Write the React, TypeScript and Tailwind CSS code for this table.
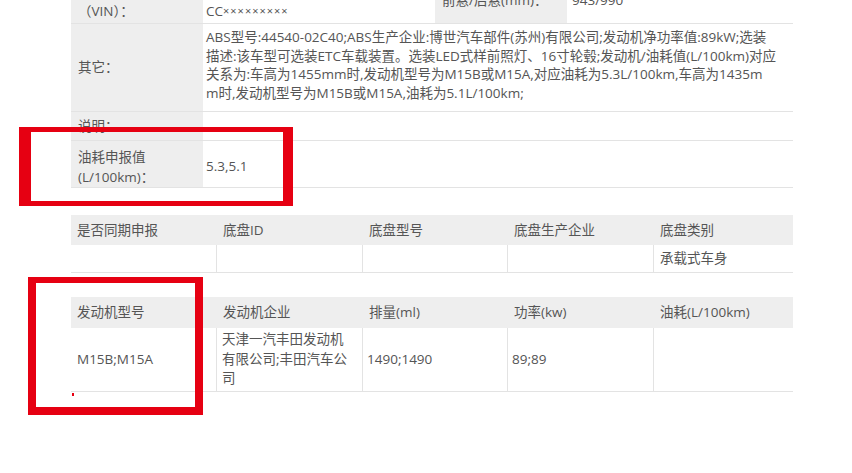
const labelCell = "bg-[#eeeeee] w-[132px] shrink-0 pl-[7px] flex";
const rowLine = "border-b border-[#e3e3e3]";

const otherLines = [
  "ABS型号:44540-02C40;ABS生产企业:博世汽车部件(苏州)有限公司;发动机净功率值:89kW;选装",
  "描述:该车型可选装ETC车载装置。选装LED式样前照灯、16寸轮毂;发动机/油耗值(L/100km)对应",
  "关系为:车高为1455mm时,发动机型号为M15B或M15A,对应油耗为5.3L/100km,车高为1435m",
  "m时,发动机型号为M15B或M15A,油耗为5.1L/100km;",
];

const chassisHead = ["是否同期申报", "底盘ID", "底盘型号", "底盘生产企业", "底盘类别"];
const chassisRow = ["", "", "", "", "承载式车身"];

const engineHead = ["发动机型号", "发动机企业", "排量(ml)", "功率(kw)", "油耗(L/100km)"];

const cols = "grid grid-cols-[146px_146px_145px_146px_139px]";

export default function App() {
  return (
    <div
      className="relative h-[473px] w-[852px] overflow-hidden bg-white text-[13.5px] text-[#555]"
      style={{ fontFamily: '"Open Sans", "Noto Sans CJK SC", sans-serif' }}
    >
      <div className="ml-[71px] w-[722px]">
        {/* vehicle info */}
        <div className="-mt-[22px]">
          <div className={`flex h-[46px] ${rowLine}`}>
            <div className={`${labelCell} items-end pb-[3px] leading-[18px]`}>
              <div>
                车辆识别代号
                <br />（VIN）：
              </div>
            </div>
            <div className="w-[232px] shrink-0 flex items-end pl-[3px] pb-[3px] leading-[18px]">
              CC<span className="text-[11px] tracking-[1px]">×××××××××</span>
            </div>
            <div className={`${labelCell} items-center`}>前悬/后悬(mm)：</div>
            <div className="flex-1 flex items-center pl-[5px]">943/990</div>
          </div>

          <div className={`flex h-[88px] ${rowLine}`}>
            <div className={`${labelCell} items-center`}>其它：</div>
            <div className="flex-1 pl-[3px] pt-[4px] leading-[18.5px] whitespace-nowrap">
              {otherLines.map((l) => (
                <div key={l}>{l}</div>
              ))}
            </div>
          </div>

          <div className={`flex h-[29px] ${rowLine}`}>
            <div className={`${labelCell} items-center`}>说明：</div>
            <div className="flex-1" />
          </div>

          <div className={`flex h-[47px] ${rowLine}`}>
            <div className={`${labelCell} items-center pt-[5px] leading-[20px]`}>
              <div>
                油耗申报值
                <br />
                (L/100km)：
              </div>
            </div>
            <div className="flex-1 flex items-center pl-[3px] pt-[5px]">5.3,5.1</div>
          </div>
        </div>

        {/* chassis */}
        <div className="mt-[27px]">
          <div className={`${cols} h-[30px] bg-[#eeeeee]`}>
            {chassisHead.map((h) => (
              <div key={h} className="flex items-center pl-[6px]">
                {h}
              </div>
            ))}
          </div>
          <div className={`${cols} h-[28px] ${rowLine}`}>
            {chassisRow.map((c, i) => (
              <div
                key={i}
                className={`flex items-center pl-[6px] ${i < 4 ? "border-r border-[#e3e3e3]" : ""}`}
              >
                {c}
              </div>
            ))}
          </div>
        </div>

        {/* engine */}
        <div className="mt-[24px]">
          <div className={`${cols} h-[31px] bg-[#eeeeee]`}>
            {engineHead.map((h) => (
              <div key={h} className="flex items-center pl-[6px]">
                {h}
              </div>
            ))}
          </div>
          <div className={`${cols} h-[64px] ${rowLine}`}>
            <div className="flex items-center pl-[6px] border-r border-[#e3e3e3]">M15B;M15A</div>
            <div className="flex items-center pl-[5px] leading-[19.5px] border-r border-[#e3e3e3]">
              <div>
                天津一汽丰田发动机
                <br />
                有限公司;丰田汽车公
                <br />司
              </div>
            </div>
            <div className="flex items-center pl-[4px] border-r border-[#e3e3e3]">1490;1490</div>
            <div className="flex items-center pl-[4px] border-r border-[#e3e3e3]">89;89</div>
            <div />
          </div>
        </div>
      </div>

      {/* red highlight boxes */}
      <div className="absolute left-[19px] top-[127px] h-[79px] w-[274px] border-y-[5px] border-l-[12px] border-r-[10px] border-[#e60012]" />
      <div className="absolute left-[28px] top-[277px] h-[138px] w-[175px] border-[8px] border-t-[6px] border-[#e60012]" />
      <div className="absolute left-[72px] top-[393px] h-[3px] w-[2px] bg-[#e60012]" />
    </div>
  );
}
